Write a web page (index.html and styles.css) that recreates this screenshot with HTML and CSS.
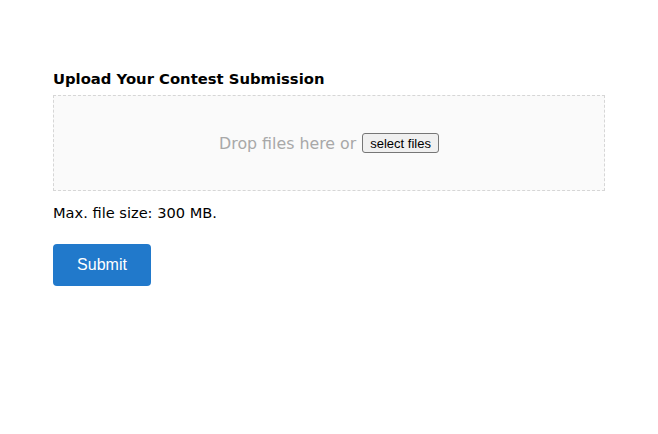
FILE: index.html
```html
<!doctype html>
<html lang="en">
<head>
    <meta charset="utf-8">
    <title>Upload Your Contest Submission</title>
    <meta name="viewport" content="width=device-width, initial-scale=1">
    <link rel="stylesheet" href="styles.css">
</head>

<body class="upload-body">
<main class="upload-page">
    <form class="upload-form" action="#" method="post">
        <h1 class="upload-title">Upload Your Contest Submission</h1>

        <div class="upload-dropzone">
            <span class="upload-drop-text">Drop files here or</span>
            <button type="button" class="upload-select-button">select files</button>
        </div>

        <p class="upload-note">Max. file size: 300 MB.</p>

        <input type="submit" class="upload-submit-button" value="Submit"/>
    </form>
</main>
</body>
</html>
```

FILE: styles.css
```css
.upload-body {
    margin: 0;
    background: #FFFFFF;
    color: #000000;
    font-family: "DejaVu Sans", "Lucida Grande", sans-serif;
    -webkit-font-smoothing: antialiased;
}

.upload-page {
    padding: 69px 53px 0;
}

.upload-form {
    width: 552px;
    display: flex;
    flex-direction: column;
    align-items: flex-start;
}

.upload-title {
    margin: 0 0 6px;
    font-size: 14.8px;
    line-height: 20px;
    font-weight: bold;
}

.upload-dropzone {
    box-sizing: border-box;
    width: 100%;
    height: 96px;
    display: flex;
    align-items: center;
    justify-content: center;
    gap: 6px;
    background: #fafafa;
    border: 1px dashed #d6d6d6;
}

.upload-drop-text {
    color: #a8a8a8;
    font-size: 15.8px;
}

.upload-select-button {
    font-family: "Liberation Sans", Arial, sans-serif;
    font-size: 13px;
    padding: 1px 7px;
    height: 20px;
    color: #000000;
    background: #f0f0f0;
    border: 1px solid #767676;
    border-radius: 3px;
}

.upload-note {
    margin: 13px 0 22px;
    font-size: 14.6px;
    line-height: 18px;
}

.upload-submit-button {
    width: 98px;
    height: 42px;
    border: 0;
    border-radius: 4px;
    background-color: #2179cb;
    color: #FFFFFF;
    font-family: "Liberation Sans", Arial, sans-serif;
    font-size: 16px;
    cursor: pointer;
}
```
